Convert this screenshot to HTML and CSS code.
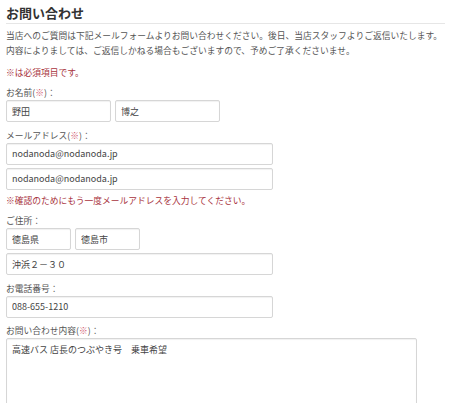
FILE: index.html
```html
<!DOCTYPE html>
<html lang="ja">
<head>
<meta charset="utf-8">
<title>お問い合わせ</title>
<link rel="stylesheet" href="styles.css">
</head>
<body>
<div class="page">
  <h1 class="title">お問い合わせ</h1>
  <p class="intro">当店へのご質問は下記メールフォームよりお問い合わせください。後日、当店スタッフよりご返信いたします。<br>内容によりましては、ご返信しかねる場合もございますので、予めご了承くださいませ。</p>
  <p class="required-note">※は必須項目です。</p>

  <div class="field">
    <div class="label">お名前(<span class="req">※</span>)：</div>
    <div class="row">
      <input class="input w-name" type="text" value="野田">
      <input class="input w-name" type="text" value="博之">
    </div>
  </div>

  <div class="field">
    <div class="label">メールアドレス(<span class="req">※</span>)：</div>
    <input class="input w-mid" type="text" value="nodanoda@nodanoda.jp">
    <input class="input w-mid stack" type="text" value="nodanoda@nodanoda.jp">
    <div class="hint">※確認のためにもう一度メールアドレスを入力してください。</div>
  </div>

  <div class="field">
    <div class="label">ご住所：</div>
    <div class="row">
      <input class="input w-small" type="text" value="徳島県">
      <input class="input w-small" type="text" value="徳島市">
    </div>
    <input class="input w-mid stack" type="text" value="沖浜２－３０">
  </div>

  <div class="field">
    <div class="label">お電話番号：</div>
    <input class="input w-mid" type="text" value="088-655-1210">
  </div>

  <div class="field">
    <div class="label">お問い合わせ内容(<span class="req">※</span>)：</div>
    <textarea class="textarea">高速バス 店長のつぶやき号　乗車希望</textarea>
  </div>
</div>
</body>
</html>
```

FILE: styles.css
```css
html, body {
  margin: 0;
  padding: 0;
  background: #ffffff;
}

body {
  font-family: "Noto Sans CJK JP", "Noto Sans", sans-serif;
  color: #555555;
  font-size: 8.75px;
  line-height: 14px;
}

.page {
  width: 439px;
  margin-left: 6px;
}

.title {
  margin: 0;
  padding: 4px 0 1px;
  font-size: 13px;
  line-height: 18px;
  font-weight: bold;
  color: #333333;
  border-bottom: 1px solid #e6e6e6;
}

.intro {
  margin: 5px 0 0;
  line-height: 14.5px;
  white-space: nowrap;
}

.required-note {
  margin: 7.5px 0 0;
  color: #a8333d;
}

.field {
  margin-top: 6.5px;
}

.label {
  line-height: 14px;
  color: #555555;
}

.req {
  color: #d0566c;
}

.row {
  display: flex;
  gap: 4px;
}

.input {
  display: block;
  box-sizing: border-box;
  height: 22px;
  margin: 0;
  padding: 0 5px;
  border: 1px solid #d6d6d6;
  border-radius: 2px;
  box-shadow: inset 0 1px 1px rgba(0, 0, 0, 0.06);
  background: #ffffff;
  font-family: "Noto Sans CJK JP", "Noto Sans", sans-serif;
  font-size: 9px;
  color: #444444;
  outline: none;
}

.stack {
  margin-top: 3px;
}

.w-name {
  width: 105px;
}

.w-small {
  width: 65px;
}

.w-mid {
  width: 267px;
}

.hint {
  margin-top: 4px;
  color: #a8333d;
}

.textarea {
  display: block;
  box-sizing: border-box;
  width: 411px;
  height: 80px;
  margin: 0;
  padding: 4px 5px;
  border: 1px solid #d6d6d6;
  border-radius: 2px;
  box-shadow: inset 0 1px 1px rgba(0, 0, 0, 0.06);
  font-family: "Noto Sans CJK JP", "Noto Sans", sans-serif;
  font-size: 9px;
  line-height: 14px;
  color: #444444;
  resize: none;
  outline: none;
}
```
